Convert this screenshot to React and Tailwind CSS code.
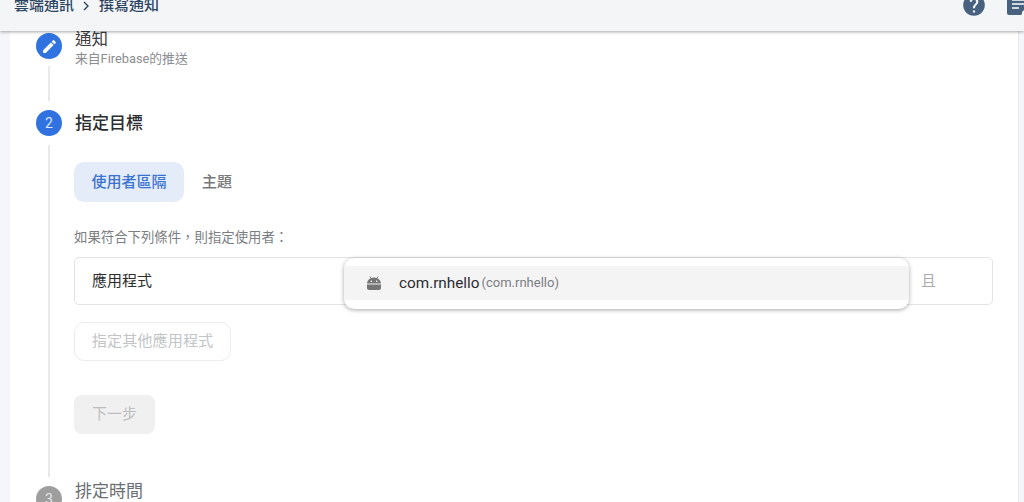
import React from "react";
import { MdEdit, MdHelp } from "react-icons/md";

function Dot({ className, children }) {
  return (
    <div className={"w-[26px] h-[26px] rounded-full flex items-center justify-center text-[14px] leading-none " + className}>
      {children}
    </div>
  );
}

export default function App() {
  return (
    <div className="relative w-[1024px] h-[502px] overflow-hidden bg-[#f4f6f9] font-['Roboto','Noto_Sans_CJK_TC',sans-serif]">
      <header className="relative z-20 h-[31px] bg-[#f4f5f7] shadow-[0_1px_3px_rgba(0,0,0,0.35)] flex items-start justify-between pl-[14px] overflow-hidden">
        <div className="flex items-center text-[15px] leading-[15px] text-[#2b4462] -mt-[2px] font-medium">
          <span>雲端通訊</span>
          <svg className="mx-[8px]" width="9" height="14" viewBox="0 0 9 14" fill="none" stroke="#2b4462" strokeWidth="1.4"><path d="M2 3l4 4-4 4" /></svg>
          <span>撰寫通知</span>
        </div>
        <div className="flex items-start gap-[19px] -mt-[8px] mr-[-6px]">
          <MdHelp className="text-[#47617f] w-[26px] h-[26px]" />
          <svg width="24" height="24" viewBox="0 0 24 24">
            <path d="M3 2h18a2 2 0 0 1 2 2v11l-8 8H3a2 2 0 0 1-2-2V4a2 2 0 0 1 2-2z" fill="#47617f" />
            <path d="M6 8h13M6 12h13M6 16h7" stroke="#fff" strokeWidth="1.6" />
            <path d="M23 17l-6 6h-1v-3l5-5z" fill="#fff" />
          </svg>
        </div>
      </header>

      <main className="ml-[10px] w-[1009px] h-[471px] bg-white border-r border-[#e6e7e9] pl-[26px] pr-[25px]">
        {/* step 1 */}
        <div className="flex gap-[13px] pt-[2px] h-[35px]">
          <Dot className="bg-[#3073e0] text-white shrink-0"><MdEdit className="w-[17px] h-[17px]" /></Dot>
          <div className="-mt-[1px]">
            <div className="text-[16.5px] leading-[16px] text-[#3c4043]">通知</div>
            <div className="text-[12.8px] leading-[14px] mt-[4px] text-[#8a8d91]">来自Firebase的推送</div>
          </div>
        </div>
        <div className="ml-[12px] w-[2px] h-[35px] bg-[#e8e9eb]" />
        {/* step 2 */}
        <div className="flex items-center gap-[13px] mt-[9px] h-[26px]">
          <Dot className="bg-[#3073e0] shrink-0 text-[#dbe6f9]">2</Dot>
          <div className="text-[17px] font-medium text-[#2b2d30] leading-[24px]">指定目標</div>
        </div>
        <div className="flex mt-[9px]">
          <div className="w-[2px] h-[332px] ml-[12px] bg-[#e8e9eb] shrink-0" />
          <div className="ml-[24px] w-[919px] pt-[17px]">
            <div className="flex items-center h-[40px]">
              <div className="w-[110px] h-[40px] rounded-[10px] bg-[#e4ecf9] text-[#3a72cf] text-[15px] font-medium flex items-center justify-center">使用者區隔</div>
              <div className="ml-[18px] text-[15px] font-medium text-[#75787c]">主題</div>
            </div>
            <div className="mt-[28px] text-[13.4px] leading-[16px] text-[#7b7e82]">如果符合下列條件，則指定使用者：</div>
            <div className="mt-[11px] h-[48px] border border-[#e2e3e5] rounded-[5px] flex items-center justify-between pl-[17px]">
              <span className="text-[15px] text-[#2b2d30]">應用程式</span>
              <span className="w-[71px] text-[15px] text-[#a9abae]">且</span>
            </div>
            <div className="mt-[17px] w-[157px] h-[39px] border border-[#eceded] rounded-[10px] text-[15.2px] text-[#c2c4c6] flex items-center justify-center">指定其他應用程式</div>
            <div className="mt-[34px] w-[81px] h-[39px] bg-[#f0f0f1] rounded-[8px] text-[15px] text-[#bcbec0] flex items-center justify-center">下一步</div>
          </div>
        </div>
        {/* step 3 */}
        <div className="flex gap-[13px] mt-[2px]">
          <Dot className="bg-[#9e9e9e] shrink-0 mt-[7px] text-[#e8e8e8]">3</Dot>
          <div className="text-[17px] leading-[24px] text-[#6b6e72]">排定時間</div>
        </div>
      </main>

      {/* dropdown overlay */}
      <div className="absolute left-[344px] top-[258px] w-[565px] h-[51px] bg-white rounded-[10px] shadow-[0_1px_4px_rgba(0,0,0,0.35)] pt-[8px] z-10">
        <div className="h-[34px] bg-[#f4f4f5] flex items-center pl-[22px]">
          <svg width="16" height="16" viewBox="0 0 16 16" className="shrink-0">
            <path d="M1 8.5a7 6 0 0 1 14 0z" fill="#757575" />
            <path d="M4 1.5L5.5 4M12 1.5L10.5 4" stroke="#757575" strokeWidth="1" />
            <path d="M1 9.5h14v3.5a2 2 0 0 1-2 2H3a2 2 0 0 1-2-2z" fill="#757575" />
            <circle cx="5.3" cy="6.3" r="0.8" fill="#fff" /><circle cx="10.7" cy="6.3" r="0.8" fill="#fff" />
          </svg>
          <span className="ml-[17px] text-[15.3px] text-[#2b2d30]">com.rnhello</span>
          <span className="ml-[2px] text-[13px] text-[#7b7e82]">(com.rnhello)</span>
        </div>
      </div>
    </div>
  );
}
